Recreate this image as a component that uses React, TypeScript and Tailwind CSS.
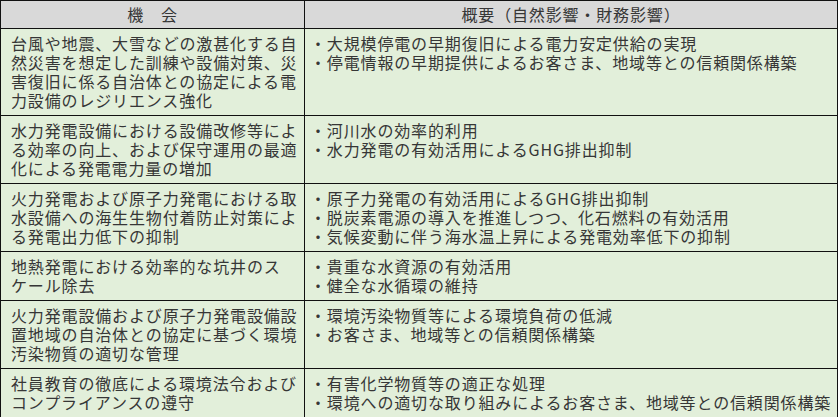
const rows: { left: string[]; right: string[] }[] = [
  {
    left: [
      '台風や地震、大雪などの激甚化する自',
      '然災害を想定した訓練や設備対策、災',
      '害復旧に係る自治体との協定による電',
      '力設備のレジリエンス強化',
    ],
    right: ['大規模停電の早期復旧による電力安定供給の実現', '停電情報の早期提供によるお客さま、地域等との信頼関係構築'],
  },
  {
    left: ['水力発電設備における設備改修等によ', 'る効率の向上、および保守運用の最適', '化による発電電力量の増加'],
    right: ['河川水の効率的利用', '水力発電の有効活用によるGHG排出抑制'],
  },
  {
    left: ['火力発電および原子力発電における取', '水設備への海生生物付着防止対策によ', 'る発電出力低下の抑制'],
    right: [
      '原子力発電の有効活用によるGHG排出抑制',
      '脱炭素電源の導入を推進しつつ、化石燃料の有効活用',
      '気候変動に伴う海水温上昇による発電効率低下の抑制',
    ],
  },
  {
    left: ['地熱発電における効率的な坑井のス', 'ケール除去'],
    right: ['貴重な水資源の有効活用', '健全な水循環の維持'],
  },
  {
    left: ['火力発電設備および原子力発電設備設', '置地域の自治体との協定に基づく環境', '汚染物質の適切な管理'],
    right: ['環境汚染物質等による環境負荷の低減', 'お客さま、地域等との信頼関係構築'],
  },
  {
    left: ['社員教育の徹底による環境法令および', 'コンプライアンスの遵守'],
    right: ['有害化学物質等の適正な処理', '環境への適切な取り組みによるお客さま、地域等との信頼関係構築'],
  },
];

export default function App() {
  return (
    <div
      className="w-[840px] h-[417px] bg-white text-[16px] leading-[19px] tracking-[0.85px] text-[#363636]"
      style={{ fontFamily: '"Noto Sans CJK JP", "Noto Sans", sans-serif' }}
    >
      <div className="w-[838px] border border-[#111]">
        {/* header */}
        <div className="flex h-[27px] bg-[#d9d9d9]">
          <div className="w-[304px] flex items-center justify-center border-r border-[#111]">機　会</div>
          <div className="flex-1 flex items-center justify-center">概要（自然影響・財務影響）</div>
        </div>
        {rows.map((row, i) => (
          <div key={i} className="flex border-t border-[#111] bg-[#e2efda]">
            <div className="w-[304px] shrink-0 border-r border-[#111] pl-[10px] py-[5px] whitespace-nowrap">
              {row.left.map((l, j) => (
                <div key={j}>{l}</div>
              ))}
            </div>
            <div className="flex-1 pl-[5px] py-[5px] whitespace-nowrap">
              {row.right.map((r, j) => (
                <div key={j}>・{r}</div>
              ))}
            </div>
          </div>
        ))}
      </div>
    </div>
  );
}
